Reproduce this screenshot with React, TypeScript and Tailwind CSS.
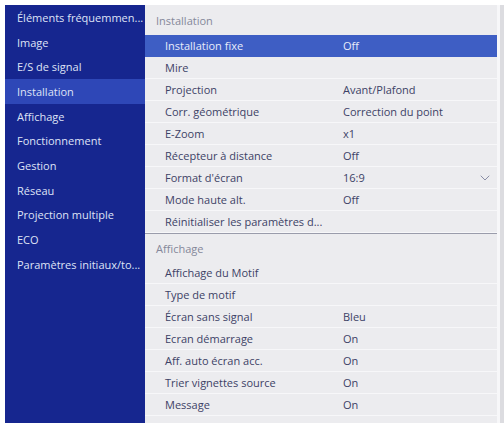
import { ChevronDown } from "lucide-react";

type Row = { label: string; value?: string; selected?: boolean; chevron?: boolean };

const MENU = [
  "Éléments fréquemmen...",
  "Image",
  "E/S de signal",
  "Installation",
  "Affichage",
  "Fonctionnement",
  "Gestion",
  "Réseau",
  "Projection multiple",
  "ECO",
  "Paramètres initiaux/to...",
];

const INSTALLATION: Row[] = [
  { label: "Installation fixe", value: "Off", selected: true },
  { label: "Mire" },
  { label: "Projection", value: "Avant/Plafond" },
  { label: "Corr. géométrique", value: "Correction du point" },
  { label: "E-Zoom", value: "x1" },
  { label: "Récepteur à distance", value: "Off" },
  { label: "Format d'écran", value: "16:9", chevron: true },
  { label: "Mode haute alt.", value: "Off" },
  { label: "Réinitialiser les paramètres d..." },
];

const AFFICHAGE: Row[] = [
  { label: "Affichage du Motif" },
  { label: "Type de motif" },
  { label: "Écran sans signal", value: "Bleu" },
  { label: "Ecran démarrage", value: "On" },
  { label: "Aff. auto écran acc.", value: "On" },
  { label: "Trier vignettes source", value: "On" },
  { label: "Message", value: "On" },
  { label: "", value: "" },
];

function SettingRow({ row }: { row: Row }) {
  return (
    <div
      className={`flex h-[22px] shrink-0 items-center border-b ${
        row.selected
          ? "border-[#3e5ec4] bg-[#3e5ec4] text-[#e8ecfa]"
          : "border-[#f7f7f9] text-[#3d4266]"
      }`}
    >
      <span className="w-[198px] shrink-0 whitespace-nowrap pl-[20px]">{row.label}</span>
      <span className="flex-1 whitespace-nowrap">{row.value}</span>
      {row.chevron ? (
        <ChevronDown className="mr-[4px] h-[16px] w-[16px] text-[#8a8ea6]" strokeWidth={1.5} />
      ) : null}
    </div>
  );
}

export default function App() {
  return (
    <div
      className="flex h-[423px] w-[504px] overflow-hidden bg-white pl-[5px] pt-[5px] text-[11px] leading-[15px]"
      style={{ fontFamily: '"Open Sans", "Noto Sans", sans-serif' }}
    >
      {/* Left category menu */}
      <div className="flex w-[140px] shrink-0 flex-col bg-[#16268f] text-[#dfe3f6]">
        {MENU.map((item) => (
          <div
            key={item}
            className={`flex h-[24.7px] shrink-0 items-center whitespace-nowrap pl-[12px] ${
              item === "Installation" ? "bg-[#2e47b7]" : ""
            }`}
          >
            {item}
          </div>
        ))}
      </div>

      {/* Settings list */}
      <div className="flex flex-1 bg-[#ececef]">
        <div className="flex flex-1 flex-col">
          <div className="flex h-[30px] shrink-0 items-center pl-[11px] text-[#85889a]">
            Installation
          </div>
          {INSTALLATION.map((row) => (
            <SettingRow key={row.label} row={row} />
          ))}
          <div className="h-px shrink-0 bg-[#9a9cab]" />
          <div className="flex h-[28px] shrink-0 items-center pl-[11px] text-[#85889a]">
            Affichage
          </div>
          {AFFICHAGE.map((row, i) => (
            <SettingRow key={i} row={row} />
          ))}
        </div>
        <div className="w-[3px] shrink-0 bg-[#f7f7f9]" />
        <div className="w-[4px] shrink-0 bg-[#dcdce0]" />
      </div>
    </div>
  );
}
